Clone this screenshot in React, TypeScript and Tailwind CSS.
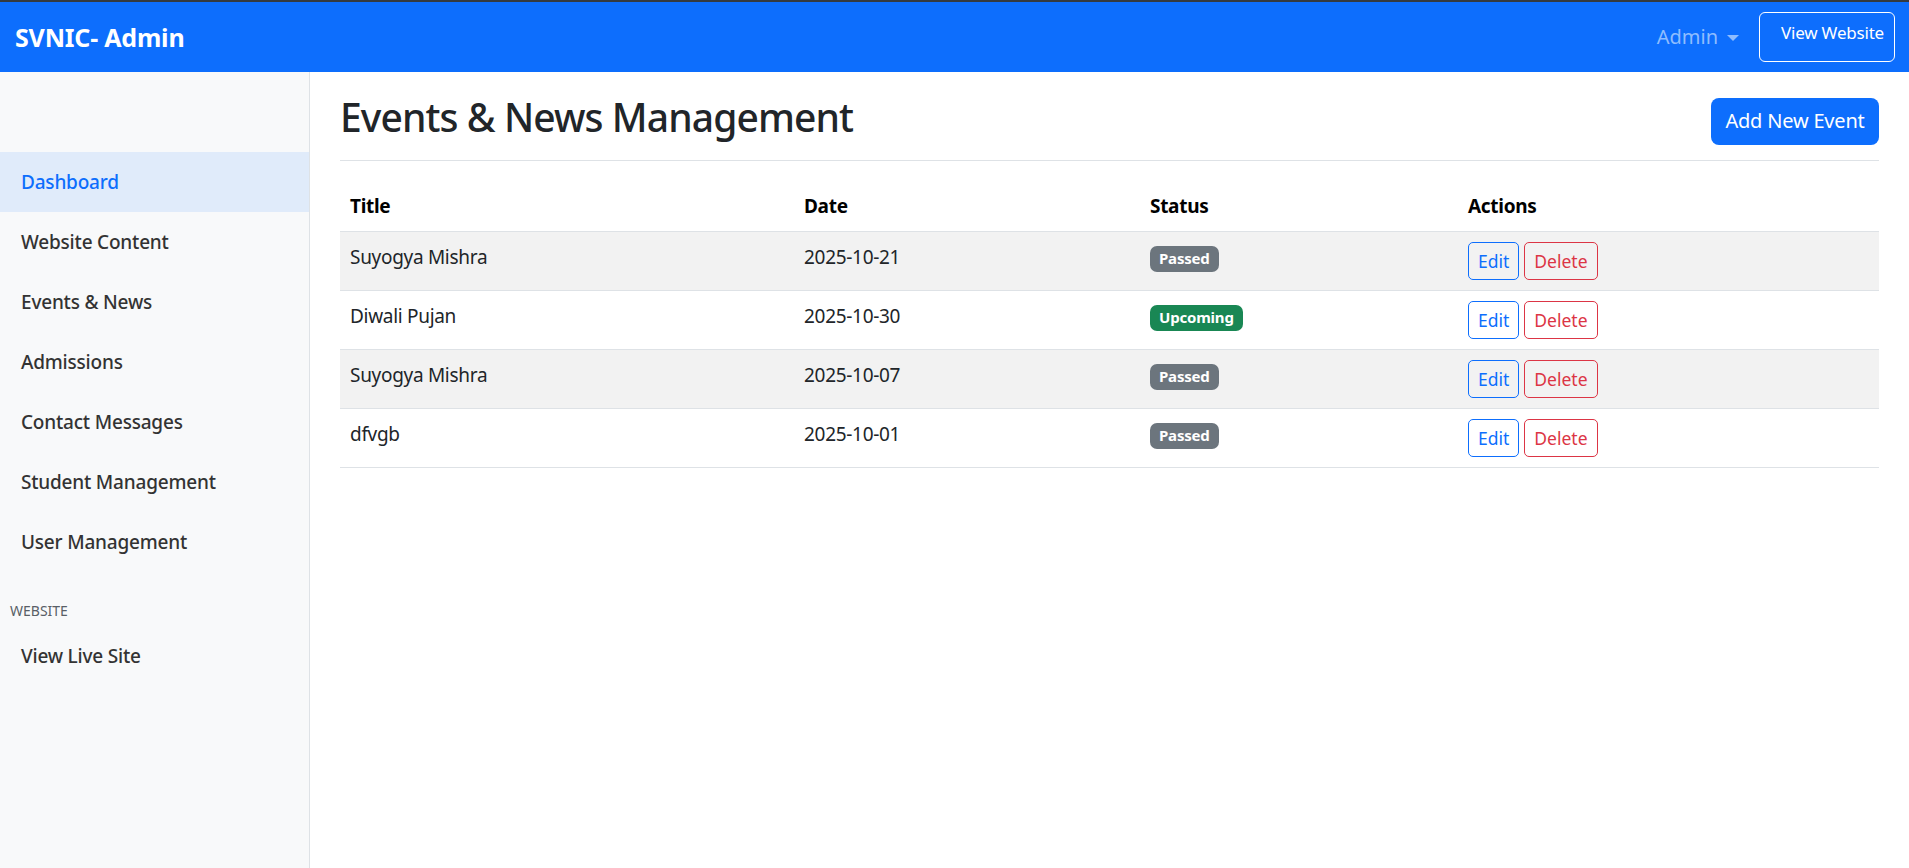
import React from "react";

const navItems = [
  "Dashboard",
  "Website Content",
  "Events & News",
  "Admissions",
  "Contact Messages",
  "Student Management",
  "User Management",
];

const events = [
  { title: "Suyogya Mishra", date: "2025-10-21", status: "Passed" },
  { title: "Diwali Pujan", date: "2025-10-30", status: "Upcoming" },
  { title: "Suyogya Mishra", date: "2025-10-07", status: "Passed" },
  { title: "dfvgb", date: "2025-10-01", status: "Passed" },
];

function Topbar() {
  return (
    <nav className="h-[70px] bg-[#0d6efd] flex items-center justify-between pl-[15px] pr-[14px]">
      <span className="text-[25px] font-bold text-white leading-none tracking-[-0.2px]">SVNIC- Admin</span>
      <div className="flex items-center">
        <button className="flex items-center text-[20px] text-[#8fbdfe] mr-[20px]">
          Admin
          <span className="ml-[9px] mt-[2px] w-0 h-0 border-l-[6px] border-r-[6px] border-t-[6px] border-l-transparent border-r-transparent border-t-[#8fbdfe]" />
        </button>
        <a className="w-[136px] h-[50px] border border-white rounded-[6px] text-white text-[17px] pl-[21px] pt-[7px] leading-[26px] tracking-[-0.2px]">
          View Website
        </a>
      </div>
    </nav>
  );
}

function Sidebar() {
  return (
    <aside className="w-[310px] shrink-0 bg-[#f8f9fa] border-r border-[#dee2e6] pt-[80px]">
      {navItems.map((item, i) => (
        <div
          key={item}
          className={
            i === 0
              ? "h-[60px] flex items-center pl-[21px] text-[19px] tracking-[-0.2px] font-medium text-[#0d6efd] bg-[#e0ebfa]"
              : "h-[60px] flex items-center pl-[21px] text-[19px] tracking-[-0.2px] font-medium text-[#333]"
          }
        >
          {item}
        </div>
      ))}
      <div className="mt-[28px] mb-[4px] h-[22px] pl-[10px] text-[14px] leading-[22px] text-[#595f66] uppercase">
        Website
      </div>
      <div className="h-[60px] flex items-center pl-[21px] text-[19px] tracking-[-0.2px] font-medium text-[#333]">
        View Live Site
      </div>
    </aside>
  );
}

function StatusBadge({ status }: { status: string }) {
  const color = status === "Upcoming" ? "bg-[#198754]" : "bg-[#6c757d]";
  return (
    <span className={`inline-block ${color} text-white font-bold text-[15px] leading-none px-[9px] pt-[5px] pb-[6px] rounded-[7px] tracking-[-0.2px]`}>
      {status}
    </span>
  );
}

export default function App() {
  return (
    <div className="min-h-screen flex flex-col bg-white text-[#212529] font-['Noto_Sans',sans-serif]">
      <div className="h-[2px] bg-[#343a40]" />
      <Topbar />
      <div className="flex flex-1">
        <Sidebar />
        <main className="flex-1 px-[30px]">
          <div className="flex items-center justify-between pt-[20px] pb-[10px] border-b border-[#dee2e6] mb-[20px]">
            <h2 className="text-[39px] font-medium leading-[50px] mb-[8px] tracking-[-0.9px]">Events &amp; News Management</h2>
            <button className="w-[168px] h-[47px] bg-[#0d6efd] text-white text-[20px] tracking-[-0.2px] rounded-[8px]">
              Add New Event
            </button>
          </div>
          <table className="w-full table-fixed border-collapse text-[19px] tracking-[-0.3px] leading-[30px]">
            <colgroup>
              <col className="w-[454px]" />
              <col className="w-[346px]" />
              <col className="w-[318px]" />
              <col />
            </colgroup>
            <thead>
              <tr className="border-b border-[#dee2e6]">
                <th className="text-left font-bold text-[#000] p-[10px]">Title</th>
                <th className="text-left font-bold text-[#000] p-[10px]">Date</th>
                <th className="text-left font-bold text-[#000] p-[10px]">Status</th>
                <th className="text-left font-bold text-[#000] p-[10px]">Actions</th>
              </tr>
            </thead>
            <tbody>
              {events.map((ev, i) => (
                <tr key={i} className={i % 2 === 0 ? "bg-[#f2f2f2] border-b border-[#dee2e6]" : "border-b border-[#dee2e6]"}>
                  <td className="p-[10px] align-top">{ev.title}</td>
                  <td className="p-[10px] align-top">{ev.date}</td>
                  <td className="p-[10px] align-top">
                    <StatusBadge status={ev.status} />
                  </td>
                  <td className="p-[10px] align-top">
                    <div className="flex gap-[5px] tracking-normal">
                      <button className="h-[38px] px-[9px] border border-[#0d6efd] text-[#0d6efd] text-[17.5px] rounded-[5px]">
                        Edit
                      </button>
                      <button className="h-[38px] px-[9px] border border-[#dc3545] text-[#dc3545] text-[17.5px] rounded-[5px]">
                        Delete
                      </button>
                    </div>
                  </td>
                </tr>
              ))}
            </tbody>
          </table>
        </main>
      </div>
    </div>
  );
}
